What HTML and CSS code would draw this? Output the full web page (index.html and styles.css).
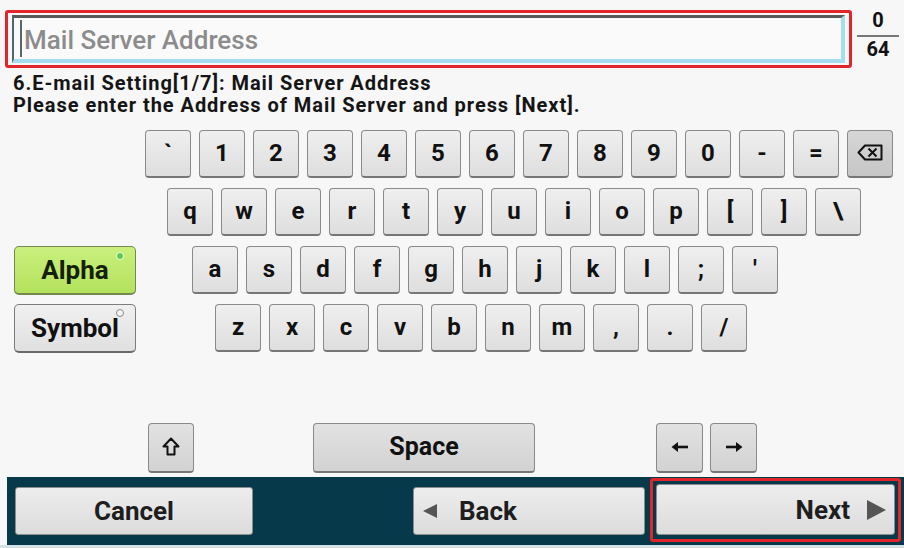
FILE: index.html
```html
<!DOCTYPE html>
<html>
<head>
<meta charset="utf-8">
<link rel="stylesheet" href="styles.css">
</head>
<body>
<div class="screen">
  <div class="top">
    <div class="field-hl">
      <div class="field"><span class="cursor"></span><span class="ph">Mail Server Address</span></div>
    </div>
    <div class="counter"><span class="num">0</span><span class="frac"></span><span class="num">64</span></div>
  </div>
  <div class="msg">
    <div class="line">6.E-mail Setting[1/7]: Mail Server Address</div>
    <div class="line">Please enter the Address of Mail Server and press [Next].</div>
  </div>
  <div class="kbd">
    <div class="row r1">
      <div class="key">`</div><div class="key">1</div><div class="key">2</div><div class="key">3</div><div class="key">4</div><div class="key">5</div><div class="key">6</div><div class="key">7</div><div class="key">8</div><div class="key">9</div><div class="key">0</div><div class="key">-</div><div class="key">=</div>
      <div class="key bs"><svg width="26" height="17" viewBox="0 0 26 17"><path d="M8 1.5 H24.5 V15.5 H8 L1.5 8.5 Z" fill="none" stroke="#111" stroke-width="2" stroke-linejoin="round"/><path d="M11.5 4.5 L19.5 12.5 M19.5 4.5 L11.5 12.5" stroke="#111" stroke-width="2"/></svg></div>
    </div>
    <div class="row r2">
      <div class="key">q</div><div class="key">w</div><div class="key">e</div><div class="key">r</div><div class="key">t</div><div class="key">y</div><div class="key">u</div><div class="key">i</div><div class="key">o</div><div class="key">p</div><div class="key">[</div><div class="key">]</div><div class="key">\</div>
    </div>
    <div class="row r3">
      <div class="mode alpha">Alpha<span class="dot on"></span></div>
      <div class="keys k3">
        <div class="key">a</div><div class="key">s</div><div class="key">d</div><div class="key">f</div><div class="key">g</div><div class="key">h</div><div class="key">j</div><div class="key">k</div><div class="key">l</div><div class="key">;</div><div class="key">'</div>
      </div>
    </div>
    <div class="row r4">
      <div class="mode symbol">Symbol<span class="dot off"></span></div>
      <div class="keys k4">
        <div class="key">z</div><div class="key">x</div><div class="key">c</div><div class="key">v</div><div class="key">b</div><div class="key">n</div><div class="key">m</div><div class="key">,</div><div class="key">.</div><div class="key">/</div>
      </div>
    </div>
  </div>
  <div class="bottomkeys">
    <div class="key dk shift"><svg width="18" height="19" viewBox="0 0 18 19"><path d="M9 1.5 L16.5 9.5 H12.5 V17.5 H5.5 V9.5 H1.5 Z" fill="none" stroke="#111" stroke-width="2" stroke-linejoin="round"/></svg></div>
    <div class="key dk space">Space</div>
    <div class="arrows">
      <div class="key dk arrow"><svg width="18" height="12" viewBox="0 0 18 12"><path d="M17 6 H4" stroke="#111" stroke-width="2.6"/><path d="M0.5 6 L7 1 V11 Z" fill="#111"/></svg></div>
      <div class="key dk arrow"><svg width="18" height="12" viewBox="0 0 18 12"><path d="M1 6 H14" stroke="#111" stroke-width="2.6"/><path d="M17.5 6 L11 1 V11 Z" fill="#111"/></svg></div>
    </div>
  </div>
  <div class="bar">
    <div class="btn cancel">Cancel</div>
    <div class="btn back"><span class="tri-l"></span>Back</div>
    <div class="next-hl"><div class="btn next">Next<span class="tri-r"></span></div></div>
  </div>
  <div class="underline"></div>
</div>
</body>
</html>
```
FILE: styles.css
```css
html, body {
  margin: 0;
  padding: 0;
  background: #ffffff;
}
body {
  font-family: Roboto, "Liberation Sans", sans-serif;
  color: #111;
}
.screen {
  width: 904px;
  height: 548px;
  background: #f7f7f7;
  overflow: hidden;
}
.top {
  display: flex;
  align-items: flex-start;
  padding-top: 10px;
}
.field-hl {
  margin-left: 5px;
  width: 847px;
  height: 58px;
  box-sizing: border-box;
  border: 3px solid #e0262a;
  border-radius: 3px;
  padding: 2px 4px;
}
.field {
  height: 48px;
  box-sizing: border-box;
  background: #fafafa;
  border-top: 3px solid #595959;
  border-left: 2px solid #4f6670;
  border-right: 4px solid #a6dcef;
  border-bottom: 4px solid #a6dcef;
  display: flex;
  align-items: center;
}
.cursor {
  width: 2px;
  height: 37px;
  background: #58676d;
  margin-left: 6px;
  margin-right: 2px;
}
.ph {
  font-size: 26px;
  color: #8c8c8c;
  font-weight: 500;
  padding-top: 2px;
}
.counter {
  margin-left: 5px;
  width: 42px;
  display: flex;
  flex-direction: column;
  align-items: center;
  font-weight: bold;
  font-size: 20px;
}
.counter .num {
  line-height: 20px;
  height: 20px;
}
.counter .frac {
  width: 42px;
  height: 2px;
  background: #777;
  margin: 5px 0 2px;
}
.msg {
  margin-top: 4px;
  padding-left: 13px;
  font-weight: bold;
  font-size: 20px;
  line-height: 22px;
  color: #151515;
  letter-spacing: 0.95px;
}
.kbd {
  margin-top: 14px;
  display: flex;
  flex-direction: column;
  gap: 10px;
}
.row {
  display: flex;
  height: 48px;
  gap: 8px;
}
.r1 { padding-left: 145px; }
.r2 { padding-left: 167px; }
.r3, .r4 { padding-left: 14px; gap: 0; }
.keys { display: flex; gap: 8px; }
.k3 { margin-left: 56px; }
.k4 { margin-left: 79px; }
.key {
  width: 46px;
  height: 48px;
  box-sizing: border-box;
  background: linear-gradient(#efefef, #dedede);
  border: 1px solid #8a8a8a;
  border-bottom: 2px solid #767676;
  border-radius: 4px;
  display: flex;
  align-items: center;
  justify-content: center;
  font-weight: bold;
  font-size: 24px;
  color: #111;
  padding-bottom: 2px;
}
.key.bs {
  background: linear-gradient(#d6d6d6, #c6c6c6);
}
.mode {
  position: relative;
  width: 122px;
  height: 49px;
  box-sizing: border-box;
  border-radius: 5px;
  border: 1px solid #7c7c7c;
  border-bottom: 2px solid #6a6a6a;
  display: flex;
  align-items: center;
  justify-content: center;
  font-weight: bold;
  font-size: 26px;
}
.alpha {
  background: linear-gradient(#c9f07e, #b4e25c);
  border-color: #74884e;
  color: #15200a;
}
.symbol {
  background: linear-gradient(#f0f0f0, #e0e0e0);
}
.dot {
  position: absolute;
  border-radius: 50%;
  box-sizing: border-box;
}
.dot.on {
  background: #62c451;
  border: 1px solid #e8ffe0;
  width: 8px;
  height: 8px;
  top: 5px;
  right: 11px;
}
.dot.off {
  border: 1px solid #8a8a8a;
  background: #f5f5f5;
  width: 8px;
  height: 8px;
  top: 4px;
  right: 11px;
}
.bottomkeys {
  margin-top: 71px;
  display: flex;
  height: 50px;
  padding-left: 148px;
}
.key.dk {
  height: 50px;
  background: linear-gradient(#e2e2e2, #d2d2d2);
}
.space {
  width: 222px;
  margin-left: 119px;
  font-size: 25px;
}
.arrows {
  display: flex;
  gap: 7px;
  margin-left: 121px;
}
.key.arrow { width: 47px; }
.bar {
  margin-top: 4px;
  margin-left: 7px;
  height: 68px;
  background: #06394a;
  display: flex;
  align-items: flex-start;
}
.btn {
  box-sizing: border-box;
  background: linear-gradient(#ededed, #dcdcdc);
  border: 1px solid #8c8c8c;
  border-radius: 3px;
  display: flex;
  align-items: center;
  justify-content: center;
  font-weight: bold;
  font-size: 26px;
  color: #1e1e1e;
}
.cancel {
  margin-left: 8px;
  margin-top: 10px;
  width: 238px;
  height: 48px;
}
.back {
  margin-left: 160px;
  margin-top: 10px;
  width: 232px;
  height: 48px;
  justify-content: flex-start;
  padding-left: 9px;
}
.tri-l {
  width: 0;
  height: 0;
  border-top: 7px solid transparent;
  border-bottom: 7px solid transparent;
  border-right: 14px solid #555;
  margin-right: 22px;
}
.next-hl {
  margin-left: 5px;
  margin-top: 1px;
  width: 251px;
  height: 64px;
  box-sizing: border-box;
  border: 3px solid #e0262a;
  border-radius: 3px;
  padding: 3px 3px 0 3px;
}
.next {
  width: 100%;
  height: 51px;
  justify-content: flex-end;
  padding-right: 8px;
}
.tri-r {
  width: 0;
  height: 0;
  border-top: 10px solid transparent;
  border-bottom: 10px solid transparent;
  border-left: 19px solid #555;
  margin-left: 17px;
}
.underline {
  height: 3px;
  background: #d4e0e4;
}
```
